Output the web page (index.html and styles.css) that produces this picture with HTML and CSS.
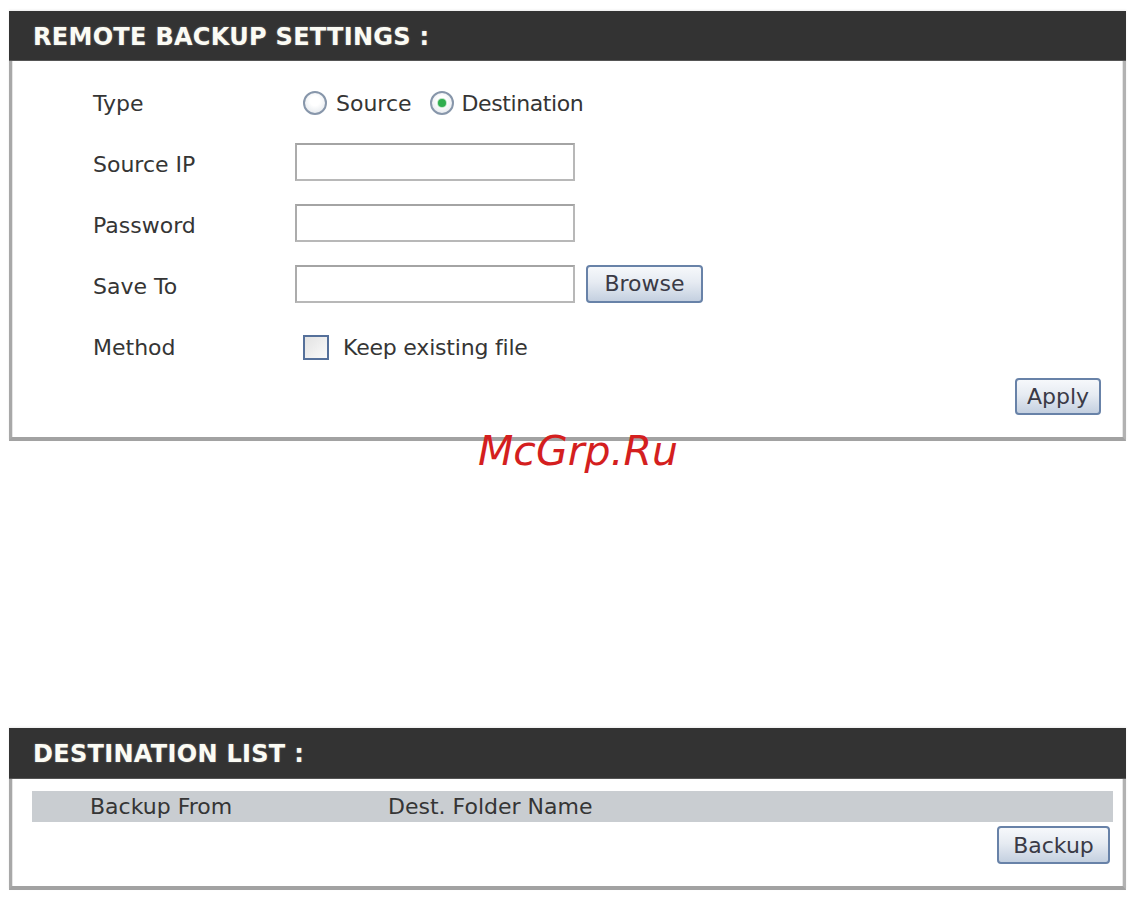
FILE: index.html
```html
<!DOCTYPE html>
<html>
<head>
<meta charset="utf-8">
<link rel="stylesheet" href="styles.css">
</head>
<body>
<div class="panel panel-settings">
  <div class="panel-head">REMOTE BACKUP SETTINGS :</div>
  <div class="panel-body">
    <div class="form">
      <div class="label">Type</div>
      <div class="ctrl radios">
        <span class="radio"></span><span class="opt">Source</span>
        <span class="radio checked"></span><span class="opt dest">Destination</span>
      </div>
      <div class="label">Source IP</div>
      <div class="ctrl"><span class="input"></span></div>
      <div class="label">Password</div>
      <div class="ctrl"><span class="input"></span></div>
      <div class="label">Save To</div>
      <div class="ctrl"><span class="input"></span><span class="btn browse">Browse</span></div>
      <div class="label">Method</div>
      <div class="ctrl checkrow"><span class="check"></span><span class="opt keep">Keep existing file</span></div>
    </div>
    <div class="actions"><span class="btn apply">Apply</span></div>
  </div>
</div>

<div class="watermark">McGrp.Ru</div>

<div class="panel panel-list">
  <div class="panel-head">DESTINATION LIST :</div>
  <div class="panel-body list-body">
    <div class="list-header">
      <span class="col-from">Backup From</span>
      <span class="col-dest">Dest. Folder Name</span>
    </div>
    <div class="actions list-actions"><span class="btn backup">Backup</span></div>
  </div>
</div>
</body>
</html>
```
FILE: styles.css
```css
html, body {
  margin: 0;
  padding: 0;
  background: #ffffff;
}
body {
  position: relative;
  font-family: "DejaVu Sans", Verdana, sans-serif;
  font-size: 22px;
  color: #353535;
  width: 1142px;
  height: 899px;
  overflow: hidden;
}
.panel {
  width: 1117px;
  margin-left: 9px;
  box-shadow: 0 -1px 2px rgba(0,0,0,0.08);
}
.panel-settings {
  margin-top: 11px;
}
.panel-list {
  margin-top: 287px;
}
.panel-head {
  background: #333333;
  height: 50px;
  display: flex;
  align-items: center;
  padding-left: 24px;
  padding-top: 2px;
  font-weight: bold;
  font-size: 24px;
  letter-spacing: 0.3px;
  color: #fbfbf4;
  text-shadow: 0 0 2px rgba(255,255,255,0.35);
  border-bottom: 1px solid #555;
  box-sizing: border-box;
}
.panel-list .panel-head {
  height: 51px;
}
.panel-body {
  border-left: 3px solid #a8a8a8;
  border-right: 3px solid #b2b2b2;
  border-bottom: 4px solid #a2a2a2;
  box-shadow: inset 1px 0 0 #e6e6e6, inset -1px 0 0 #e6e6e6;
  padding: 12px 22px 22px 81px;
}
.form {
  display: grid;
  grid-template-columns: 202px 1fr;
  grid-auto-rows: 61px;
}
.label {
  display: flex;
  align-items: center;
}
.ctrl {
  display: flex;
  align-items: center;
}
.radios {
  padding-left: 8px;
  margin-top: -1px;
}
.radio {
  width: 24px;
  height: 24px;
  box-sizing: border-box;
  border-radius: 50%;
  border: 2px solid #8796aa;
  background: radial-gradient(circle at 50% 40%, #ffffff 30%, #dde2e8 100%);
  display: inline-flex;
  align-items: center;
  justify-content: center;
}
.radio.checked::after {
  content: "";
  width: 8px;
  height: 8px;
  border-radius: 50%;
  background: #2fae4e;
  box-shadow: 0 0 0 1px #bfe5c8;
}
.opt {
  margin-left: 9px;
  margin-right: 18px;
}
.opt.dest {
  margin-left: 8px;
  letter-spacing: -0.4px;
}
.input {
  display: block;
  width: 280px;
  height: 38px;
  box-sizing: border-box;
  border: 2px solid #b8b8b8;
  border-top-color: #a4a4a4;
  border-left-color: #acacac;
  background: #ffffff;
  margin-top: -5px;
}
.btn {
  display: inline-flex;
  align-items: center;
  justify-content: center;
  box-sizing: border-box;
  border: 2px solid #6882a8;
  border-radius: 4px;
  background: linear-gradient(#f6f8fb 0%, #e6ebf2 45%, #c4d0e0 100%);
  color: #3a3a46;
  font-size: 22px;
}
.browse {
  width: 117px;
  height: 38px;
  margin-left: 11px;
  margin-top: -6px;
}
.checkrow {
  padding-left: 8px;
}
.check {
  width: 26px;
  height: 25px;
  box-sizing: border-box;
  border: 2px solid #55709a;
  background: linear-gradient(135deg, #e2e2e2, #fafafa);
}
.opt.keep {
  margin-left: 14px;
  letter-spacing: -0.2px;
}
.actions {
  display: flex;
  justify-content: flex-end;
}
.apply {
  width: 86px;
  height: 37px;
}
.list-body {
  padding: 12px 13px 22px 20px;
}
.list-header {
  height: 31px;
  background: #c9cdd1;
  margin-right: -3px;
  display: flex;
  align-items: center;
}
.col-from {
  margin-left: 58px;
  width: 298px;
}
.list-actions {
  margin-top: 4px;
}
.backup {
  width: 113px;
  height: 38px;
}
.watermark {
  position: absolute;
  left: 478px;
  top: 431px;
  font-family: "DejaVu Sans", Verdana, sans-serif;
  font-style: italic;
  font-size: 41px;
  line-height: 1;
  color: #d41f1f;
  z-index: 2;
}
```
